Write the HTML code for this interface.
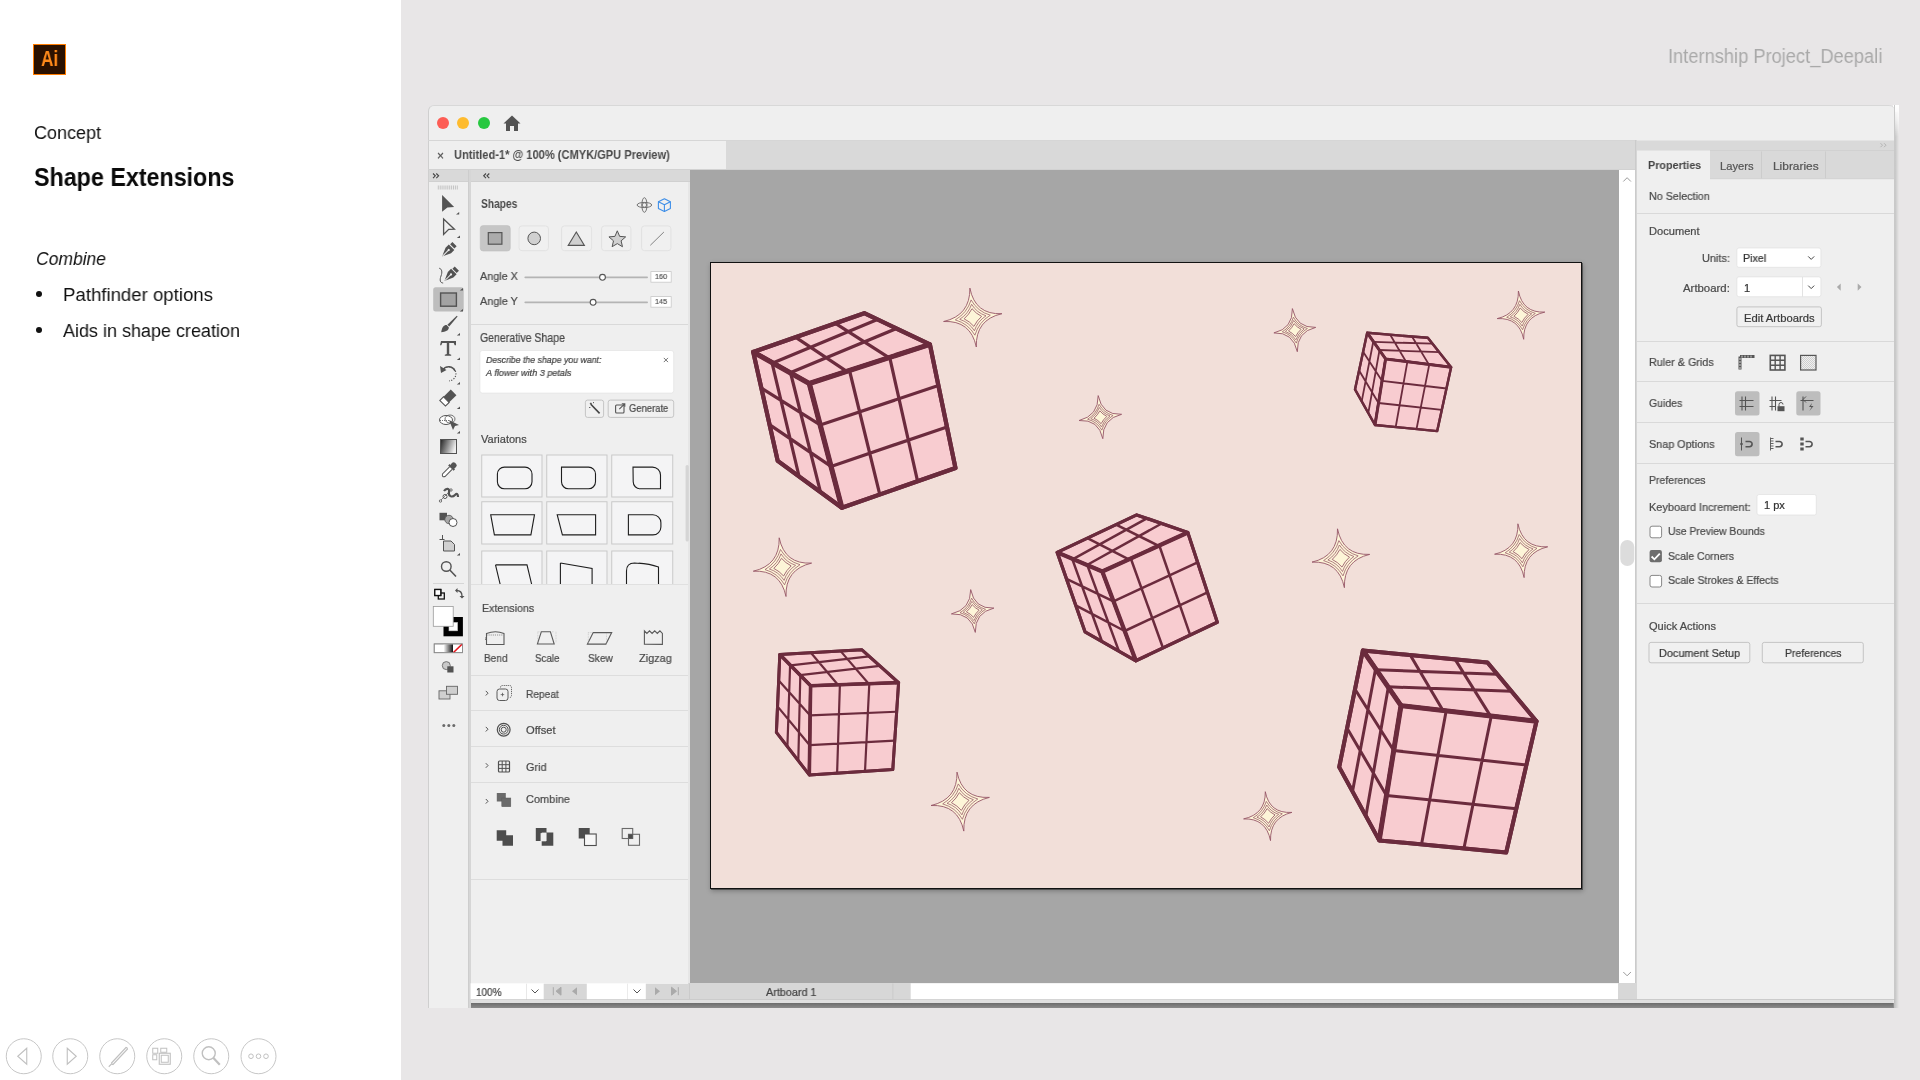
<!DOCTYPE html><html><head><meta charset="utf-8"><style>
*{box-sizing:border-box}
body{margin:0;width:1920px;height:1080px;overflow:hidden;background:#e8e6e7;font-family:"Liberation Sans",sans-serif;position:relative}
.t{position:absolute;white-space:nowrap;line-height:normal;-webkit-font-smoothing:antialiased}
body>*{will-change:transform}
.r{position:absolute}
svg.r{overflow:visible}
</style></head><body><div class="r" style="left:0px;top:0px;width:401px;height:1080px;background:#ffffff;"></div>
<div class="r" style="left:33px;top:44px;width:33px;height:31px;background:#2b1100;border:1.6px solid #ff7c00;"></div>
<div class="t" style="left:41.10px;top:46.01px;font-size:22.09px;color:#ff8a1a;font-weight:bold;font-style:normal;transform:scaleX(0.7785);transform-origin:0 0;">Ai</div>
<div class="t" style="left:33.50px;top:121.93px;font-size:18.75px;color:#111;font-weight:normal;font-style:normal;transform:scaleX(0.9594);transform-origin:0 0;">Concept</div>
<div class="t" style="left:33.50px;top:163.04px;font-size:25.15px;color:#0a0a0a;font-weight:bold;font-style:normal;transform:scaleX(0.9257);transform-origin:0 0;">Shape Extensions</div>
<div class="t" style="left:36.00px;top:247.90px;font-size:18.90px;color:#111;font-weight:normal;font-style:italic;transform:scaleX(0.9257);transform-origin:0 0;">Combine</div>
<div class="r" style="left:35.5px;top:290.5px;width:6px;height:6px;border-radius:50%;background:#111"></div>
<div class="r" style="left:35.5px;top:326.5px;width:6px;height:6px;border-radius:50%;background:#111"></div>
<div class="t" style="left:63.10px;top:284.03px;font-size:18.75px;color:#111;font-weight:normal;font-style:normal;transform:scaleX(0.9924);transform-origin:0 0;">Pathfinder options</div>
<div class="t" style="left:63.10px;top:319.60px;font-size:19.11px;color:#111;font-weight:normal;font-style:normal;transform:scaleX(0.9411);transform-origin:0 0;">Aids in shape creation</div>
<div class="t" style="left:1667.60px;top:45.61px;font-size:19.33px;color:#a9a9a9;font-weight:normal;font-style:normal;transform:scaleX(0.9456);transform-origin:0 0;">Internship Project_Deepali</div>
<svg class="r" style="left:0px;top:0px" width="1920" height="1080" viewBox="0 0 1920 1080"><circle cx="23.75" cy="1056.25" r="17.5" fill="none" stroke="#c6c6c6" stroke-width="1"/><circle cx="70.25" cy="1056.25" r="17.5" fill="none" stroke="#c6c6c6" stroke-width="1"/><circle cx="117.25" cy="1056.25" r="17.5" fill="none" stroke="#c6c6c6" stroke-width="1"/><circle cx="164.25" cy="1056.25" r="17.5" fill="none" stroke="#c6c6c6" stroke-width="1"/><circle cx="211.25" cy="1056.25" r="17.5" fill="none" stroke="#c6c6c6" stroke-width="1"/><circle cx="258.5" cy="1056.25" r="17.5" fill="none" stroke="#c6c6c6" stroke-width="1"/><path d="M26.75,1048.25 L17.75,1056.25 L26.75,1064.25 Z" fill="none" stroke="#c0c0c0" stroke-width="1.1"/><path d="M67.25,1048.25 L76.25,1056.25 L67.25,1064.25 Z" fill="none" stroke="#c0c0c0" stroke-width="1.1"/><path d="M126.25,1047.25 L111.25,1063.25 M127.75,1048.75 L112.75,1064.75 M126.25,1047.25 L127.75,1048.75 M111.25,1063.25 L112.75,1064.75 M111.75,1063.75 L108.75,1066.75" fill="none" stroke="#c0c0c0" stroke-width="1.1"/><rect x="152.75" y="1048.25" width="5" height="5" fill="none" stroke="#c0c0c0"/><rect x="160.75" y="1048.25" width="6" height="4" fill="none" stroke="#c0c0c0"/><rect x="152.75" y="1054.75" width="4" height="5" fill="none" stroke="#c0c0c0"/><rect x="159.25" y="1053.25" width="11" height="11" fill="none" stroke="#c0c0c0" stroke-width="1.1"/><rect x="161.25" y="1055.25" width="7" height="7" fill="none" stroke="#c0c0c0" stroke-width="1"/><circle cx="208.75" cy="1053.25" r="6.5" fill="none" stroke="#c0c0c0" stroke-width="1.4"/><path d="M213.25,1057.75 L219.75,1064.75" stroke="#c0c0c0" stroke-width="2.2"/><circle cx="251.0" cy="1056.25" r="2.3" fill="none" stroke="#c0c0c0" stroke-width="1"/><circle cx="258.5" cy="1056.25" r="2.3" fill="none" stroke="#c0c0c0" stroke-width="1"/><circle cx="266.0" cy="1056.25" r="2.3" fill="none" stroke="#c0c0c0" stroke-width="1"/></svg>
<div class="r" style="left:470px;top:999px;width:1424px;height:1px;background:#cbcbcb;"></div>
<div class="r" style="left:470px;top:1000px;width:1423px;height:3px;background:#e0e0e0;"></div>
<div class="r" style="left:470px;top:1003px;width:1426px;height:5px;background:linear-gradient(#6c6c6c,#8c8c8c)"></div>
<div class="r" style="left:1893px;top:1003px;width:4px;height:5px;background:linear-gradient(90deg,#8c8c8c,rgba(180,180,180,0.6))"></div>
<div class="r" style="left:1894px;top:112px;width:5px;height:896px;background:linear-gradient(90deg,#bdbdbd,#d2d2d2 50%,rgba(231,229,230,0))"></div>
<div class="r" style="left:1893px;top:105px;width:6px;height:32px;background:linear-gradient(#fff,rgba(255,255,255,0.6) 50%,rgba(255,255,255,0))"></div>
<div class="r" style="left:428px;top:105px;width:1467px;height:35px;background:#efefef;border-top-left-radius:6px;border-top-right-radius:6px;border-left:1px solid #cfcfcf;border-top:1px solid #d8d8d8;"></div>
<div class="r" style="left:428px;top:140px;width:1467px;height:1px;background:#d6d6d6;"></div>
<div class="r" style="left:437.0px;top:116.9px;width:12.4px;height:12.4px;border-radius:50%;background:#fd5d55"></div>
<div class="r" style="left:457.3px;top:116.9px;width:12.4px;height:12.4px;border-radius:50%;background:#febb2e"></div>
<div class="r" style="left:477.6px;top:116.9px;width:12.4px;height:12.4px;border-radius:50%;background:#27c840"></div>
<svg class="r" style="left:503px;top:115px" width="18" height="17" viewBox="0 0 18 17"><path d="M9,0.5 L17.5,8.5 L15,8.5 L15,16 L11,16 L11,11 L7,11 L7,16 L3,16 L3,8.5 L0.5,8.5 Z" fill="#535353"/></svg>
<div class="r" style="left:428px;top:141px;width:1208px;height:29px;background:#d9d9d9;"></div>
<div class="r" style="left:428px;top:141px;width:298px;height:28px;background:#efefef;border-left:1px solid #cfcfcf;"></div>
<div class="r" style="left:428px;top:169px;width:1208px;height:1px;background:#d2d2d2;"></div>
<div class="t" style="left:436.50px;top:148.64px;font-size:12.00px;color:#555;font-weight:normal;font-style:normal;-webkit-text-stroke:0.22px currentColor;">×</div>
<div class="t" style="left:453.75px;top:148.32px;font-size:12.35px;color:#4a4a4a;font-weight:bold;font-style:normal;transform:scaleX(0.8975);transform-origin:0 0;">Untitled-1* @ 100% (CMYK/GPU Preview)</div>
<div class="r" style="left:428px;top:170px;width:41px;height:838px;background:#efefef;border-left:1px solid #cfcfcf;"></div>
<div class="r" style="left:428px;top:170px;width:41px;height:12px;background:#d9d9d9;border-left:1px solid #cfcfcf;border-bottom:1px solid #d0d0d0;"></div>
<div class="r" style="left:468px;top:170px;width:3px;height:838px;background:#d6d6d6;border-left:1px solid #cdcdcd;"></div>
<div class="r" style="left:471px;top:170px;width:219px;height:829px;background:#efefef;"></div>
<div class="r" style="left:471px;top:170px;width:219px;height:12px;background:#d9d9d9;border-bottom:1px solid #d0d0d0;"></div>
<div class="r" style="left:688px;top:182px;width:2px;height:817px;background:#e6e6e6;"></div>
<div class="r" style="left:690px;top:170px;width:929px;height:813px;background:#a6a6a6;"></div>
<div class="r" style="left:710px;top:262px;width:872px;height:627px;background:#f2dfd9;border:1px solid #111;box-shadow:1px 1px 0 rgba(0,0,0,0.4),1px 2px 5px rgba(0,0,0,0.28)"></div>
<svg class="r" style="left:0;top:0" width="1920" height="1080" viewBox="0 0 1920 1080"><path d="M969.9,288.1Q975.0,314.9 1001.9,313.7Q975.5,319.6 976.3,347.0Q970.8,320.2 943.6,321.5Q970.3,315.5 969.9,288.1Z" fill="#fdf5d8" stroke="#955566" stroke-width="0.9"/><path d="M971.1,299.9Q977.6,311.6 990.3,315.2Q978.7,322.2 974.9,335.2Q968.3,323.6 955.3,319.9Q967.1,313.0 971.1,299.9Z" fill="#fdf5d8" stroke="#955566" stroke-width="0.75"/><path d="M971.6,304.3Q976.7,312.7 986.0,315.8Q977.6,321.3 974.4,330.8Q969.2,322.4 959.7,319.3Q968.2,313.9 971.6,304.3Z" fill="#fdf5d8" stroke="#955566" stroke-width="0.75"/><path d="M972.0,308.7Q976.0,313.6 981.6,316.4Q976.8,320.6 973.9,326.4Q969.8,321.6 964.1,318.8Q969.0,314.5 972.0,308.7Z" fill="#fdf5d8" stroke="#955566" stroke-width="0.85"/><path d="M1292.4,308.6Q1296.3,328.2 1315.7,327.4Q1296.7,331.7 1297.3,351.7Q1293.3,332.1 1273.9,332.9Q1293.0,328.6 1292.4,308.6Z" fill="#fdf5d8" stroke="#955566" stroke-width="0.9"/><path d="M1293.4,317.2Q1298.1,325.8 1307.4,328.5Q1299.0,333.5 1296.3,343.1Q1291.5,334.5 1282.3,331.8Q1290.6,326.8 1293.4,317.2Z" fill="#fdf5d8" stroke="#955566" stroke-width="0.75"/><path d="M1293.7,320.5Q1297.5,326.6 1304.2,328.9Q1298.2,332.9 1295.9,339.8Q1292.2,333.7 1285.4,331.4Q1291.4,327.4 1293.7,320.5Z" fill="#fdf5d8" stroke="#955566" stroke-width="0.75"/><path d="M1294.1,323.7Q1297.0,327.2 1301.1,329.3Q1297.6,332.4 1295.6,336.6Q1292.6,333.1 1288.5,331.0Q1292.0,327.9 1294.1,323.7Z" fill="#fdf5d8" stroke="#955566" stroke-width="0.85"/><path d="M1518.4,291.0Q1522.7,313.1 1544.8,312.1Q1523.1,316.9 1523.7,339.3Q1519.3,317.4 1497.2,318.6Q1518.9,313.6 1518.4,291.0Z" fill="#fdf5d8" stroke="#955566" stroke-width="0.9"/><path d="M1519.5,300.7Q1524.8,310.3 1535.3,313.4Q1525.8,319.0 1522.6,329.7Q1517.2,320.2 1506.7,317.3Q1516.3,311.5 1519.5,300.7Z" fill="#fdf5d8" stroke="#955566" stroke-width="0.75"/><path d="M1519.8,304.3Q1524.1,311.3 1531.7,313.8Q1524.9,318.3 1522.2,326.1Q1518.0,319.2 1510.3,316.8Q1517.2,312.2 1519.8,304.3Z" fill="#fdf5d8" stroke="#955566" stroke-width="0.75"/><path d="M1520.2,308.0Q1523.6,312.0 1528.2,314.3Q1524.2,317.8 1521.8,322.5Q1518.5,318.5 1513.9,316.3Q1517.9,312.7 1520.2,308.0Z" fill="#fdf5d8" stroke="#955566" stroke-width="0.85"/><path d="M1098.2,395.6Q1101.9,415.3 1121.6,414.3Q1102.3,418.8 1102.8,438.7Q1098.9,419.2 1079.1,420.5Q1098.5,415.8 1098.2,395.6Z" fill="#fdf5d8" stroke="#955566" stroke-width="0.9"/><path d="M1099.1,404.3Q1103.8,412.8 1113.1,415.5Q1104.7,420.6 1101.8,430.1Q1097.0,421.7 1087.6,419.2Q1096.2,414.0 1099.1,404.3Z" fill="#fdf5d8" stroke="#955566" stroke-width="0.75"/><path d="M1099.4,407.5Q1103.2,413.7 1110.0,415.9Q1103.8,419.9 1101.5,426.9Q1097.7,420.8 1090.8,418.7Q1097.0,414.6 1099.4,407.5Z" fill="#fdf5d8" stroke="#955566" stroke-width="0.75"/><path d="M1099.8,410.8Q1102.7,414.3 1106.8,416.4Q1103.3,419.5 1101.1,423.7Q1098.2,420.2 1094.0,418.2Q1097.6,415.1 1099.8,410.8Z" fill="#fdf5d8" stroke="#955566" stroke-width="0.85"/><path d="M779.2,537.8Q784.6,564.5 811.6,563.1Q785.1,569.2 786.0,596.5Q780.5,569.8 753.3,571.2Q779.9,565.1 779.2,537.8Z" fill="#fdf5d8" stroke="#955566" stroke-width="0.9"/><path d="M780.5,549.5Q787.2,561.1 800.0,564.7Q788.4,571.7 784.6,584.8Q777.9,573.2 765.0,569.6Q776.7,562.6 780.5,549.5Z" fill="#fdf5d8" stroke="#955566" stroke-width="0.75"/><path d="M781.0,553.9Q786.3,562.3 795.6,565.3Q787.2,570.8 784.1,580.4Q778.8,572.0 769.4,569.0Q777.8,563.5 781.0,553.9Z" fill="#fdf5d8" stroke="#955566" stroke-width="0.75"/><path d="M781.5,558.3Q785.6,563.1 791.2,565.9Q786.4,570.2 783.6,576.0Q779.4,571.2 773.8,568.4Q778.6,564.1 781.5,558.3Z" fill="#fdf5d8" stroke="#955566" stroke-width="0.85"/><path d="M970.7,589.6Q974.3,609.1 993.9,608.1Q974.7,612.5 975.3,632.4Q971.3,612.9 951.4,613.9Q970.9,609.5 970.7,589.6Z" fill="#fdf5d8" stroke="#955566" stroke-width="0.9"/><path d="M971.6,598.2Q976.2,606.6 985.5,609.3Q977.1,614.3 974.3,623.8Q969.4,615.4 960.0,612.7Q968.6,607.7 971.6,598.2Z" fill="#fdf5d8" stroke="#955566" stroke-width="0.75"/><path d="M971.9,601.4Q975.6,607.5 982.3,609.7Q976.2,613.7 973.9,620.6Q970.1,614.5 963.2,612.3Q969.4,608.3 971.9,601.4Z" fill="#fdf5d8" stroke="#955566" stroke-width="0.75"/><path d="M972.2,604.6Q975.1,608.1 979.1,610.1Q975.7,613.2 973.6,617.4Q970.6,613.9 966.4,611.9Q970.0,608.8 972.2,604.6Z" fill="#fdf5d8" stroke="#955566" stroke-width="0.85"/><path d="M1337.5,528.8Q1342.9,555.6 1369.7,554.4Q1343.5,560.3 1344.4,587.7Q1338.9,560.9 1312.0,562.1Q1338.3,556.2 1337.5,528.8Z" fill="#fdf5d8" stroke="#955566" stroke-width="0.9"/><path d="M1338.9,540.6Q1345.5,552.3 1358.2,555.9Q1346.7,562.9 1343.0,575.9Q1336.3,564.2 1323.6,560.6Q1335.1,553.6 1338.9,540.6Z" fill="#fdf5d8" stroke="#955566" stroke-width="0.75"/><path d="M1339.4,545.0Q1344.6,553.4 1353.9,556.5Q1345.6,562.0 1342.5,571.5Q1337.2,563.1 1327.9,560.0Q1336.2,554.5 1339.4,545.0Z" fill="#fdf5d8" stroke="#955566" stroke-width="0.75"/><path d="M1339.9,549.4Q1343.9,554.3 1349.5,557.1Q1344.8,561.3 1342.0,567.1Q1337.9,562.2 1332.2,559.4Q1337.0,555.2 1339.9,549.4Z" fill="#fdf5d8" stroke="#955566" stroke-width="0.85"/><path d="M1517.9,523.8Q1523.0,548.2 1547.7,546.8Q1523.4,552.5 1524.1,577.6Q1519.2,553.0 1494.6,554.2Q1518.7,548.7 1517.9,523.8Z" fill="#fdf5d8" stroke="#955566" stroke-width="0.9"/><path d="M1519.2,534.5Q1525.3,545.1 1537.0,548.3Q1526.4,554.8 1522.9,566.8Q1516.9,556.1 1505.2,552.8Q1515.7,546.4 1519.2,534.5Z" fill="#fdf5d8" stroke="#955566" stroke-width="0.75"/><path d="M1519.6,538.5Q1524.5,546.2 1533.1,548.9Q1525.4,554.0 1522.4,562.8Q1517.7,555.0 1509.2,552.2Q1516.8,547.2 1519.6,538.5Z" fill="#fdf5d8" stroke="#955566" stroke-width="0.75"/><path d="M1520.1,542.6Q1523.9,546.9 1529.1,549.5Q1524.6,553.4 1522.0,558.7Q1518.3,554.3 1513.1,551.7Q1517.5,547.8 1520.1,542.6Z" fill="#fdf5d8" stroke="#955566" stroke-width="0.85"/><path d="M957.0,772.1Q962.4,798.8 989.4,797.4Q962.9,803.6 963.8,831.1Q958.2,804.2 931.0,805.5Q957.7,799.5 957.0,772.1Z" fill="#fdf5d8" stroke="#955566" stroke-width="0.9"/><path d="M958.3,783.9Q964.9,795.5 977.8,799.0Q966.2,806.1 962.4,819.3Q955.7,807.6 942.7,803.9Q954.4,796.9 958.3,783.9Z" fill="#fdf5d8" stroke="#955566" stroke-width="0.75"/><path d="M958.8,788.3Q964.0,796.7 973.4,799.7Q965.0,805.2 961.9,814.8Q956.6,806.4 947.1,803.3Q955.6,797.8 958.8,788.3Z" fill="#fdf5d8" stroke="#955566" stroke-width="0.75"/><path d="M959.3,792.7Q963.4,797.5 969.0,800.3Q964.2,804.6 961.4,810.4Q957.2,805.6 951.5,802.7Q956.4,798.5 959.3,792.7Z" fill="#fdf5d8" stroke="#955566" stroke-width="0.85"/><path d="M1265.3,791.7Q1269.5,813.7 1291.9,812.4Q1270.0,817.6 1270.5,840.6Q1266.1,818.1 1243.6,818.9Q1265.7,814.2 1265.3,791.7Z" fill="#fdf5d8" stroke="#955566" stroke-width="0.9"/><path d="M1266.3,801.4Q1271.7,810.9 1282.3,813.8Q1272.6,819.7 1269.4,830.7Q1263.9,820.9 1253.3,817.7Q1263.0,812.1 1266.3,801.4Z" fill="#fdf5d8" stroke="#955566" stroke-width="0.75"/><path d="M1266.7,805.0Q1270.9,811.9 1278.7,814.3Q1271.7,819.0 1269.0,827.0Q1264.7,819.9 1256.9,817.2Q1263.9,812.8 1266.7,805.0Z" fill="#fdf5d8" stroke="#955566" stroke-width="0.75"/><path d="M1267.1,808.6Q1270.4,812.6 1275.0,814.9Q1271.0,818.4 1268.6,823.3Q1265.2,819.2 1260.6,816.8Q1264.6,813.4 1267.1,808.6Z" fill="#fdf5d8" stroke="#955566" stroke-width="0.85"/><polygon points="753.2,351.9 864.3,313.2 929.9,344.4 809.3,383.5" fill="#f8ccd0" stroke="#6b2b3d" stroke-width="4.2" stroke-linejoin="round"/><path d="M795.4,337.2L846.7,371.4M772.8,363.0L877.4,319.4M835.4,323.3L888.9,357.7M790.2,372.8L896.4,328.5" stroke="#6b2b3d" stroke-width="3.2" fill="none"/><polygon points="753.2,351.9 809.3,383.5 841.9,507.8 777.7,460.9" fill="#f8ccd0" stroke="#6b2b3d" stroke-width="4.2" stroke-linejoin="round"/><path d="M771.9,362.4L799.1,476.5M761.4,388.2L820.2,424.9M790.6,373.0L820.5,492.2M769.5,424.6L831.0,466.4" stroke="#6b2b3d" stroke-width="3.2" fill="none"/><polygon points="809.3,383.5 929.9,344.4 955.5,468.1 841.9,507.8" fill="#f8ccd0" stroke="#6b2b3d" stroke-width="4.2" stroke-linejoin="round"/><path d="M849.5,370.5L879.8,494.6M820.2,424.9L938.4,385.6M889.7,357.4L917.6,481.3M831.0,466.4L947.0,426.9" stroke="#6b2b3d" stroke-width="3.2" fill="none"/><polygon points="753.2,351.9 864.3,313.2 929.9,344.4 955.5,468.1 841.9,507.8 777.7,460.9" fill="none" stroke="#6b2b3d" stroke-width="4.2" stroke-linejoin="round"/><path d="M753.2,351.9L809.3,383.5L929.9,344.4M809.3,383.5L841.9,507.8" stroke="#6b2b3d" stroke-width="5.2" fill="none" stroke-linejoin="round"/><polygon points="1367.2,332.8 1427.8,337.8 1451.1,367.2 1385.6,358.9" fill="#f8ccd0" stroke="#6b2b3d" stroke-width="2.4" stroke-linejoin="round"/><path d="M1390.2,334.7L1405.9,361.5M1373.6,341.9L1432.5,343.7M1412.0,336.5L1428.8,364.4M1379.3,350.0L1439.2,352.2" stroke="#6b2b3d" stroke-width="1.8" fill="none"/><polygon points="1367.2,332.8 1385.6,358.9 1375.0,425.0 1355.0,389.4" fill="#f8ccd0" stroke="#6b2b3d" stroke-width="2.4" stroke-linejoin="round"/><path d="M1373.3,341.5L1361.7,401.3M1363.1,351.7L1382.1,380.9M1379.5,350.2L1368.3,413.1M1359.1,370.5L1378.5,403.0" stroke="#6b2b3d" stroke-width="1.8" fill="none"/><polygon points="1385.6,358.9 1451.1,367.2 1437.2,431.1 1375.0,425.0" fill="#f8ccd0" stroke="#6b2b3d" stroke-width="2.4" stroke-linejoin="round"/><path d="M1407.4,361.7L1395.7,427.0M1382.1,380.9L1446.5,388.5M1429.3,364.4L1416.5,429.1M1378.5,403.0L1441.8,409.8" stroke="#6b2b3d" stroke-width="1.8" fill="none"/><polygon points="1367.2,332.8 1427.8,337.8 1451.1,367.2 1437.2,431.1 1375.0,425.0 1355.0,389.4" fill="none" stroke="#6b2b3d" stroke-width="2.4" stroke-linejoin="round"/><path d="M1367.2,332.8L1385.6,358.9L1451.1,367.2M1385.6,358.9L1375.0,425.0" stroke="#6b2b3d" stroke-width="3.0" fill="none" stroke-linejoin="round"/><polygon points="1057.2,552.4 1136.7,514.9 1187.8,532.5 1102.3,571.5" fill="#f8ccd0" stroke="#6b2b3d" stroke-width="3.2" stroke-linejoin="round"/><path d="M1087.4,538.1L1128.8,559.4M1073.0,559.1L1146.9,518.4M1116.0,524.6L1158.7,545.8M1087.0,565.0L1161.7,523.5" stroke="#6b2b3d" stroke-width="2.5" fill="none"/><polygon points="1057.2,552.4 1102.3,571.5 1135.9,660.8 1085.0,631.8" fill="#f8ccd0" stroke="#6b2b3d" stroke-width="3.2" stroke-linejoin="round"/><path d="M1072.2,558.8L1102.0,641.5M1066.5,578.9L1113.5,601.3M1087.3,565.1L1118.9,651.1M1075.7,605.3L1124.7,631.0" stroke="#6b2b3d" stroke-width="2.5" fill="none"/><polygon points="1102.3,571.5 1187.8,532.5 1217.3,622.3 1135.9,660.8" fill="#f8ccd0" stroke="#6b2b3d" stroke-width="3.2" stroke-linejoin="round"/><path d="M1130.8,558.5L1163.0,648.0M1113.5,601.3L1197.6,562.4M1159.3,545.5L1190.2,635.1M1124.7,631.0L1207.5,592.4" stroke="#6b2b3d" stroke-width="2.5" fill="none"/><polygon points="1057.2,552.4 1136.7,514.9 1187.8,532.5 1217.3,622.3 1135.9,660.8 1085.0,631.8" fill="none" stroke="#6b2b3d" stroke-width="3.2" stroke-linejoin="round"/><path d="M1057.2,552.4L1102.3,571.5L1187.8,532.5M1102.3,571.5L1135.9,660.8" stroke="#6b2b3d" stroke-width="4.2" fill="none" stroke-linejoin="round"/><polygon points="779.8,654.5 861.7,649.7 898.6,682.7 810.6,685.7" fill="#f8ccd0" stroke="#6b2b3d" stroke-width="3.0" stroke-linejoin="round"/><path d="M810.9,652.7L837.9,684.8M790.6,665.4L869.1,656.3M840.4,650.9L868.7,683.7M800.1,675.1L879.8,665.9" stroke="#6b2b3d" stroke-width="2.2" fill="none"/><polygon points="779.8,654.5 810.6,685.7 809.3,774.9 776.4,732.4" fill="#f8ccd0" stroke="#6b2b3d" stroke-width="3.0" stroke-linejoin="round"/><path d="M790.1,664.9L787.4,746.6M778.7,680.5L810.2,715.4M800.3,675.3L798.3,760.7M777.5,706.4L809.7,745.2" stroke="#6b2b3d" stroke-width="2.2" fill="none"/><polygon points="810.6,685.7 898.6,682.7 892.8,769.6 809.3,774.9" fill="#f8ccd0" stroke="#6b2b3d" stroke-width="3.0" stroke-linejoin="round"/><path d="M839.9,684.7L837.1,773.1M810.2,715.4L896.7,711.7M869.3,683.7L865.0,771.4M809.7,745.2L894.7,740.6" stroke="#6b2b3d" stroke-width="2.2" fill="none"/><polygon points="779.8,654.5 861.7,649.7 898.6,682.7 892.8,769.6 809.3,774.9 776.4,732.4" fill="none" stroke="#6b2b3d" stroke-width="3.0" stroke-linejoin="round"/><path d="M779.8,654.5L810.6,685.7L898.6,682.7M810.6,685.7L809.3,774.9" stroke="#6b2b3d" stroke-width="3.6" fill="none" stroke-linejoin="round"/><polygon points="1362.9,650.4 1487.5,662.5 1536.5,721.2 1401.0,705.6" fill="#f8ccd0" stroke="#6b2b3d" stroke-width="4.0" stroke-linejoin="round"/><path d="M1410.2,655.0L1443.0,710.5M1376.2,669.7L1497.3,674.2M1455.1,659.4L1490.4,715.9M1388.0,686.8L1511.5,691.3" stroke="#6b2b3d" stroke-width="3.0" fill="none"/><polygon points="1362.9,650.4 1401.0,705.6 1379.2,840.4 1339.2,767.1" fill="#f8ccd0" stroke="#6b2b3d" stroke-width="4.0" stroke-linejoin="round"/><path d="M1375.6,668.8L1352.5,791.5M1355.0,689.3L1393.7,750.5M1388.3,687.2L1365.9,816.0M1347.1,728.2L1386.5,795.5" stroke="#6b2b3d" stroke-width="3.0" fill="none"/><polygon points="1401.0,705.6 1536.5,721.2 1506.2,852.5 1379.2,840.4" fill="#f8ccd0" stroke="#6b2b3d" stroke-width="4.0" stroke-linejoin="round"/><path d="M1446.2,710.8L1421.5,844.4M1393.7,750.5L1526.4,765.0M1491.3,716.0L1463.9,848.5M1386.5,795.5L1516.3,808.8" stroke="#6b2b3d" stroke-width="3.0" fill="none"/><polygon points="1362.9,650.4 1487.5,662.5 1536.5,721.2 1506.2,852.5 1379.2,840.4 1339.2,767.1" fill="none" stroke="#6b2b3d" stroke-width="4.0" stroke-linejoin="round"/><path d="M1362.9,650.4L1401.0,705.6L1536.5,721.2M1401.0,705.6L1379.2,840.4" stroke="#6b2b3d" stroke-width="5.0" fill="none" stroke-linejoin="round"/></svg>
<div class="r" style="left:1619px;top:170px;width:17px;height:813px;background:#ffffff;"></div>
<div class="r" style="left:1635px;top:140px;width:3px;height:859px;background:#d6d6d6;border-left:1px solid #cbcbcb;"></div>
<div class="r" style="left:470px;top:983px;width:1149px;height:16px;background:#d7d7d7;"></div>
<div class="r" style="left:1619px;top:983px;width:18px;height:16px;background:#d7d7d7;"></div>
<div class="r" style="left:1637px;top:140px;width:257px;height:859px;background:#efefef;"></div>
<div class="r" style="left:1894px;top:105px;width:1px;height:894px;background:#c9c9c9;"></div>
<svg class="r" style="left:0px;top:0px" width="1920" height="1080" viewBox="0 0 1920 1080"><rect x="437.8" y="185.5" width="1" height="4" fill="#c4c4c4"/><rect x="439.7" y="185.5" width="1" height="4" fill="#c4c4c4"/><rect x="441.6" y="185.5" width="1" height="4" fill="#c4c4c4"/><rect x="443.5" y="185.5" width="1" height="4" fill="#c4c4c4"/><rect x="445.4" y="185.5" width="1" height="4" fill="#c4c4c4"/><rect x="447.3" y="185.5" width="1" height="4" fill="#c4c4c4"/><rect x="449.2" y="185.5" width="1" height="4" fill="#c4c4c4"/><rect x="451.1" y="185.5" width="1" height="4" fill="#c4c4c4"/><rect x="453.0" y="185.5" width="1" height="4" fill="#c4c4c4"/><rect x="454.9" y="185.5" width="1" height="4" fill="#c4c4c4"/><rect x="456.8" y="185.5" width="1" height="4" fill="#c4c4c4"/><path d="M442.1,195.1 L454.1,206.9 L447.4,207.4 L442.1,211.8 Z" fill="#535353"/><path d="M456.0,214.5 L459.2,211.9 L459.2,214.5 Z" fill="#535353"/><path d="M443.6,219 L454.4,229.2 L448.7,229.4 L443.6,234.5 Z" fill="none" stroke="#535353" stroke-width="1.3" stroke-linejoin="miter"/><g transform="translate(448.3,250.4) rotate(45)"><path d="M-3,-8.8 h6 v3.2 h-6 z M-3.9,-4.6 h7.8 v4.6 l-3.9,8.8 l-3.9,-8.8 z" fill="#535353"/><path d="M0,-0.6 v9" stroke="#efefef" stroke-width="1"/><circle cx="0" cy="-0.6" r="1.1" fill="#efefef"/></g><path d="M456.8,238 L460,235.4 L460,238 Z" fill="#535353"/><g transform="translate(450.6,274.8) rotate(45)"><path d="M-3,-8.8 h6 v3.2 h-6 z M-3.9,-4.6 h7.8 v4.6 l-3.9,8.8 l-3.9,-8.8 z" fill="#535353"/><path d="M0,-0.6 v9" stroke="#efefef" stroke-width="1"/><circle cx="0" cy="-0.6" r="1.1" fill="#efefef"/></g><path d="M439.2,268.2 C442,269 442.5,272 441,276 C439.5,280 440,283 443.2,283" fill="none" stroke="#535353" stroke-width="1"/><rect x="433.2" y="287.3" width="30.5" height="24.3" rx="2.5" fill="#bdbdbd"/><rect x="440.6" y="293" width="15.8" height="13.2" fill="#a3a3a3" stroke="#535353" stroke-width="1.4"/><path d="M459.8,290.5 L463,287.9 L463,290.5 Z" fill="#535353"/><path d="M459.8,311.5 L463,308.9 L463,311.5 Z" fill="#535353"/><path d="M456.8,315.8 L457.6,316.6 L449.2,326.6 L447.4,324.8 Z" fill="#535353"/><path d="M446.6,325 C443.5,325 442,327.5 441.2,332.2 C445.5,331.8 449,330.5 448.8,327.2 Z" fill="#535353"/><path d="M456.8,335.5 L460,332.9 L460,335.5 Z" fill="#535353"/><path d="M441,341 h15 v4.3 h-1.3 l-1,-2.2 h-4.5 v10.8 l2,0.8 v1 h-6.4 v-1 l2,-0.8 v-10.8 h-4.5 l-1,2.2 h-1.3 z" fill="#535353"/><path d="M456.8,360 L460,357.4 L460,360 Z" fill="#535353"/><path d="M442.5,371 A7,7 0 1 1 449,380.8" fill="none" stroke="#535353" stroke-width="1.2" stroke-dasharray="1.2,1.4"/><path d="M443,369.5 A7,7 0 0 1 455,371" fill="none" stroke="#535353" stroke-width="1.6"/><path d="M440,366 L441,373 L446.5,370 Z" fill="#535353"/><path d="M456.8,384.5 L460,381.9 L460,384.5 Z" fill="#535353"/><g transform="translate(448.3,397.6) rotate(-45)"><rect x="-3" y="-4" width="10.5" height="8" fill="#535353"/><rect x="-8" y="-4" width="5.2" height="8" fill="#fff" stroke="#535353" stroke-width="1.1"/></g><path d="M456.8,409 L460,406.4 L460,409 Z" fill="#535353"/><ellipse cx="446" cy="420" rx="6.5" ry="4.5" fill="#fff" stroke="#535353" stroke-width="1"/><ellipse cx="450" cy="419" rx="5" ry="4" fill="none" stroke="#535353" stroke-width="0.8"/><path d="M440,420.5 h9" stroke="#535353" stroke-width="0.8" stroke-dasharray="1,1"/><path d="M449,420 L459,425 L455,426 L453,430 Z" fill="#535353"/><path d="M456.8,433.5 L460,430.9 L460,433.5 Z" fill="#535353"/><defs><linearGradient id="gr1" x1="0" y1="0" x2="1" y2="0.3"><stop offset="0" stop-color="#222"/><stop offset="1" stop-color="#eee"/></linearGradient></defs><rect x="440.5" y="439.5" width="16" height="14" fill="url(#gr1)" stroke="#535353" stroke-width="1"/><g transform="translate(448.5,470.5) rotate(45)"><rect x="-2.8" y="-10" width="5.6" height="5.5" rx="2" fill="#535353"/><rect x="-3.8" y="-5.5" width="7.6" height="2.2" fill="#535353"/><path d="M-1.8,-3.3 v10 q1.8,3 3.6,0 v-10" fill="#fff" stroke="#535353" stroke-width="1"/></g><path d="M444,491 C446,488 450,488 449,492 C448,496 452,498 455,495 C457,493 458,494 458,497" fill="none" stroke="#535353" stroke-width="2.2"/><circle cx="445" cy="496.5" r="2" fill="#fff" stroke="#535353"/><circle cx="440.5" cy="501" r="1.2" fill="none" stroke="#535353" stroke-width="0.8"/><circle cx="451" cy="490" r="1.2" fill="none" stroke="#535353" stroke-width="0.8"/><path d="M441,500 L450,491" stroke="#535353" stroke-width="0.7"/><rect x="439.5" y="512.8" width="7.5" height="7.5" fill="#535353"/><circle cx="449" cy="519.5" r="4.2" fill="#a7a7a7" stroke="#535353" stroke-width="0.8"/><circle cx="453" cy="522.5" r="4" fill="#fff" stroke="#535353" stroke-width="1"/><path d="M442.5,535 v5 M439.5,539.5 h5" stroke="#535353" stroke-width="1"/><path d="M443.5,541 h7.5 l3.5,3.5 v6.5 h-11 z" fill="#d0d0d0" stroke="#535353" stroke-width="1"/><path d="M456.8,555.5 L460,552.9 L460,555.5 Z" fill="#535353"/><circle cx="446.3" cy="566.5" r="4.8" fill="none" stroke="#535353" stroke-width="1.4"/><path d="M449.8,570 L456,576.5" stroke="#535353" stroke-width="1.6"/><rect x="433" y="583" width="31" height="1" fill="#d6d6d6"/><rect x="434.8" y="589.5" width="6" height="6" fill="#fff" stroke="#111" stroke-width="1.3"/><rect x="438.3" y="593" width="6" height="6" fill="none" stroke="#111" stroke-width="1.3"/><rect x="434.8" y="589.5" width="6" height="6" fill="#fff" stroke="#111" stroke-width="1.3"/><path d="M456.5,590.5 C460,590.5 462,592.5 462,596" fill="none" stroke="#535353" stroke-width="1.3"/><path d="M455,590.5 L457.5,588 L457.5,593 Z M462,598.5 L459.5,596 L464.5,596 Z" fill="#535353"/><rect x="443.5" y="617" width="19.4" height="19.3" fill="#000"/><rect x="449" y="622.5" width="8.5" height="8.3" fill="#fff" stroke="#cfcfcf" stroke-width="0.6"/><rect x="433.3" y="606.6" width="19.9" height="19.7" fill="#fff" stroke="#9a9a9a" stroke-width="0.8"/><defs><linearGradient id="gr2" x1="0" x2="1"><stop offset="0" stop-color="#fff"/><stop offset="1" stop-color="#111"/></linearGradient></defs><rect x="434.2" y="643.9" width="28.3" height="8.8" fill="#fff" stroke="#8a8a8a" stroke-width="0.8"/><rect x="443.6" y="644.3" width="9.4" height="8" fill="url(#gr2)"/><path d="M453.5,652.5 L462,644.2" stroke="#e8141c" stroke-width="1.6"/><rect x="434.2" y="643.9" width="28.3" height="8.8" fill="none" stroke="#8a8a8a" stroke-width="0.8"/><circle cx="446.3" cy="665.6" r="4" fill="#c9c9c9" stroke="#6a6a6a" stroke-width="0.9"/><rect x="447.3" y="666.3" width="6.2" height="6.2" fill="#535353"/><rect x="439" y="690.8" width="11" height="8.2" fill="#cfcfcf" stroke="#666" stroke-width="0.9"/><rect x="446.5" y="686.3" width="11" height="8" fill="#cfcfcf" stroke="#666" stroke-width="0.9"/><circle cx="443.8" cy="725.4" r="1.5" fill="#6a6a6a"/><circle cx="448.8" cy="725.4" r="1.5" fill="#6a6a6a"/><circle cx="453.8" cy="725.4" r="1.5" fill="#6a6a6a"/><path d="M433,173.5 l2.3,2.3 l-2.3,2.3 M436.3,173.5 l2.3,2.3 l-2.3,2.3" fill="none" stroke="#444" stroke-width="1.1"/><path d="M486,173.5 l-2.3,2.3 l2.3,2.3 M489.3,173.5 l-2.3,2.3 l2.3,2.3" fill="none" stroke="#444" stroke-width="1.1"/></svg>
<svg class="r" style="left:0px;top:0px" width="1920" height="1080" viewBox="0 0 1920 1080"><g transform="translate(644.4,205)"><ellipse rx="7.3" ry="2.6" fill="none" stroke="#666" stroke-width="0.9"/><ellipse rx="2.6" ry="7.3" fill="none" stroke="#666" stroke-width="0.9"/><circle r="2.2" fill="none" stroke="#666" stroke-width="0.8"/></g><g transform="translate(664.4,205)" fill="none" stroke="#3d8ee8" stroke-width="1.1" stroke-linejoin="round"><path d="M0,-6.3 L6,-3.3 L6,3.5 L0,6.5 L-6,3.5 L-6,-3.3 Z"/><path d="M-6,-3.3 L0,-0.3 L6,-3.3 M0,-0.3 L0,6.5"/></g><rect x="480.25" y="225.6" width="30.0" height="25.4" rx="3" fill="#c6c6c6" stroke="#bdbdbd" stroke-width="0.6"/><rect x="519.05" y="225.9" width="29.4" height="24.8" rx="3" fill="#f0f0f0" stroke="#dedede" stroke-width="0.8"/><rect x="561.55" y="225.9" width="30.049999999999976" height="24.8" rx="3" fill="#f0f0f0" stroke="#dedede" stroke-width="0.8"/><rect x="601.55" y="225.9" width="29.4" height="24.8" rx="3" fill="#f0f0f0" stroke="#dedede" stroke-width="0.8"/><rect x="641.55" y="225.9" width="29.4" height="24.8" rx="3" fill="#f0f0f0" stroke="#dedede" stroke-width="0.8"/><rect x="488.3" y="232.6" width="13.6" height="11.6" fill="#ababab" stroke="#555" stroke-width="1.2"/><circle cx="534.2" cy="238.4" r="6.3" fill="#d0d0d0" stroke="#555" stroke-width="1"/><path d="M576.3,232 L584.4,245.4 L568.2,245.4 Z" fill="#d0d0d0" stroke="#555" stroke-width="1.1" stroke-linejoin="miter"/><polygon points="617.30,230.80 619.65,236.36 625.67,236.88 621.10,240.84 622.47,246.72 617.30,243.60 612.13,246.72 613.50,240.84 608.93,236.88 614.95,236.36" fill="#d0d0d0" stroke="#555" stroke-width="1"/><path d="M650.3,245.3 L663.9,232" stroke="#777" stroke-width="0.9"/><rect x="524.4" y="276.40000000000003" width="123.6" height="1.8" rx="0.9" fill="#b4b4b4"/><circle cx="602.5" cy="277.3" r="2.9" fill="#fff" stroke="#555" stroke-width="1.1"/><rect x="650.9" y="271.6" width="20.3" height="10.6" fill="#fff" stroke="#c8c8c8" stroke-width="0.8"/><rect x="524.4" y="301.40000000000003" width="123.6" height="1.8" rx="0.9" fill="#b4b4b4"/><circle cx="593.1" cy="302.3" r="2.9" fill="#fff" stroke="#555" stroke-width="1.1"/><rect x="650.9" y="296.6" width="20.3" height="10.6" fill="#fff" stroke="#c8c8c8" stroke-width="0.8"/><rect x="471" y="324" width="217" height="1" fill="#d9d9d9"/><rect x="479.9" y="350.5" width="193.8" height="42.6" rx="2.5" fill="#fff" stroke="#e2e2e2" stroke-width="0.7"/><path d="M663.8,357.9 l4.2,4.2 M668,357.9 l-4.2,4.2" stroke="#666" stroke-width="0.9"/><rect x="585.4" y="400.1" width="18.2" height="17.3" rx="2.2" fill="#f0f0f0" stroke="#b9b9b9" stroke-width="0.8"/><path d="M590.8,404.3 L599.6,413.4" stroke="#444" stroke-width="1.6"/><path d="M589.8,403.6 h2 M590.8,402.6 v2 M589,407.5 h1.4 M593.5,402 v1.2" stroke="#444" stroke-width="0.8"/><rect x="608.2" y="400.1" width="65.5" height="17.3" rx="2.2" fill="#f0f0f0" stroke="#b9b9b9" stroke-width="0.8"/><rect x="615.6" y="405" width="8.4" height="8" rx="1" fill="none" stroke="#555" stroke-width="1.1"/><path d="M619.3,409.2 L624.4,404.2 M621.8,403.8 h3 v3" fill="none" stroke="#555" stroke-width="1.1"/><rect x="481.75" y="455.0" width="60.25" height="42.0" fill="#f4f4f5" stroke="#c9c9c9" stroke-width="1"/><rect x="546.75" y="455.0" width="60.25" height="42.0" fill="#f4f4f5" stroke="#c9c9c9" stroke-width="1"/><rect x="611.75" y="455.0" width="61.0" height="42.0" fill="#f4f4f5" stroke="#c9c9c9" stroke-width="1"/><rect x="481.75" y="501.75" width="60.25" height="42.25" fill="#f4f4f5" stroke="#c9c9c9" stroke-width="1"/><rect x="546.75" y="501.75" width="60.25" height="42.25" fill="#f4f4f5" stroke="#c9c9c9" stroke-width="1"/><rect x="611.75" y="501.75" width="61.0" height="42.25" fill="#f4f4f5" stroke="#c9c9c9" stroke-width="1"/><rect x="481.75" y="551.0" width="60.25" height="48.5" fill="#f4f4f5" stroke="#c9c9c9" stroke-width="1"/><rect x="546.75" y="551.0" width="60.25" height="48.5" fill="#f4f4f5" stroke="#c9c9c9" stroke-width="1"/><rect x="611.75" y="551.0" width="61.0" height="48.5" fill="#f4f4f5" stroke="#c9c9c9" stroke-width="1"/><rect x="497.4" y="467.1" width="34.6" height="21.7" rx="7" fill="none" stroke="#1e1e1e" stroke-width="1.1"/><path d="M561.5,467.1 h27 a7,7 0 0 1 7,7 v7.7 a7,7 0 0 1 -7,7 h-20 a7,7 0 0 1 -7,-7 z" fill="none" stroke="#1e1e1e" stroke-width="1.1"/><path d="M633,467.1 h19.5 a8,8 0 0 1 8,8 v13.7 h-20.3 a7,7 0 0 1 -7,-7 z" fill="none" stroke="#1e1e1e" stroke-width="1.1"/><path d="M490.7,514.7 h43.8 l-3.6,20.2 h-36.5 z" fill="none" stroke="#1e1e1e" stroke-width="1.1"/><path d="M557.2,514.7 h38.4 v20.2 h-33.2 z" fill="none" stroke="#1e1e1e" stroke-width="1.1"/><path d="M628.4,514.7 h24.5 a8,8 0 0 1 8,8 v4.2 a8,8 0 0 1 -8,8 h-24.5 z" fill="none" stroke="#1e1e1e" stroke-width="1.1"/><clipPath id="vc"><rect x="471" y="450" width="217" height="134"/></clipPath><g clip-path="url(#vc)"><path d="M495.5,564.9 h31.5 l6,25 M495.5,564.9 l6,25" fill="none" stroke="#1e1e1e" stroke-width="1.1"/><path d="M560.4,563 l31.7,5.5 v25 M560.4,563 v25" fill="none" stroke="#1e1e1e" stroke-width="1.1"/><path d="M626.5,590 v-19 q0,-8 8,-8 q14,0.5 24,4 v23" fill="none" stroke="#1e1e1e" stroke-width="1.1"/></g><rect x="685.6" y="465" width="3.2" height="76.5" rx="1.6" fill="#d5d5d5"/><rect x="471" y="584" width="217" height="400" fill="#efefef"/><rect x="471" y="584" width="217" height="1" fill="#e0e0e0"/><path d="M486.5,633.5 q9,-3.5 17.5,0 v11 h-17.5 z" fill="none" stroke="#5a5a5a" stroke-width="1.1"/><path d="M487.5,635 h15.5" stroke="#5a5a5a" stroke-width="0.7" stroke-dasharray="0.9,1"/><path d="M485,637.5 l1.3,1.2 l-1.3,1.2" fill="none" stroke="#5a5a5a" stroke-width="0.8"/><path d="M541.3,631.8 h9.1 l3.8,12.2 h-16.8 z" fill="none" stroke="#5a5a5a" stroke-width="1.1"/><path d="M537.8,631.8 h2 M552,631.8 h2 M537.8,631.8 v11 M556,631.8 v11" stroke="#b5b5b5" stroke-width="0.6" stroke-dasharray="0.8,0.8"/><path d="M593.2,632.6 h18.5 l-5.8,11.5 h-18.5 z" fill="none" stroke="#5a5a5a" stroke-width="1.1"/><path d="M588.3,632.6 h4 M588.3,632.6 v11 M606.5,633 v11" stroke="#b5b5b5" stroke-width="0.6" stroke-dasharray="0.8,0.8"/><path d="M644.4,644.3 v-13.5 l2.5,2.6 l2.6,-2.6 l2.6,2.6 l2.6,-2.6 l2.6,2.6 l2.6,-2.6 l2.5,2.6 v11 z" fill="none" stroke="#5a5a5a" stroke-width="1.1"/><rect x="471" y="675" width="217" height="1" fill="#dddddd"/><rect x="471" y="710" width="217" height="1" fill="#dddddd"/><rect x="471" y="746" width="217" height="1" fill="#dddddd"/><rect x="471" y="782" width="217" height="1" fill="#dddddd"/><rect x="471" y="879" width="217" height="1" fill="#dddddd"/><path d="M485.8,690.9000000000001 l2.2,2.3 l-2.2,2.3" fill="none" stroke="#555" stroke-width="1"/><path d="M485.8,726.9000000000001 l2.2,2.3 l-2.2,2.3" fill="none" stroke="#555" stroke-width="1"/><path d="M485.8,763.2 l2.2,2.3 l-2.2,2.3" fill="none" stroke="#555" stroke-width="1"/><path d="M485.8,799.0 l2.2,2.3 l-2.2,2.3" fill="none" stroke="#555" stroke-width="1"/><rect x="497" y="689" width="11" height="11.5" rx="2.5" fill="none" stroke="#5a5a5a" stroke-width="1"/><path d="M500.5,687.5 q0,-2 2,-2 h7 q2,0 2,2 v8 q0,2 -2,2" fill="none" stroke="#5a5a5a" stroke-width="0.9" stroke-dasharray="1.2,0.8"/><path d="M502.5,692.8 v3.5 M500.7,694.6 h3.5" stroke="#5a5a5a" stroke-width="0.8"/><circle cx="503.7" cy="729.7" r="6.4" fill="none" stroke="#505050" stroke-width="1.2"/><circle cx="503.7" cy="729.7" r="4.4" fill="none" stroke="#505050" stroke-width="1"/><circle cx="503.7" cy="729.7" r="2.5" fill="#efefef" stroke="#505050" stroke-width="1"/><rect x="498.5" y="761" width="11" height="11" rx="1" fill="none" stroke="#505050" stroke-width="1.2"/><path d="M502.2,761 v11 M505.9,761 v11 M498.5,764.7 h11 M498.5,768.4 h11" stroke="#505050" stroke-width="1"/><rect x="496.8" y="793" width="9" height="8.5" fill="#6a6a6a"/><rect x="501.8" y="798" width="9" height="8.7" fill="#6a6a6a" stroke="#5a5a5a" stroke-width="0.5"/><path d="M496.7,830.3 h9.5 v5 h6.8 v10.5 h-10.5 v-5 h-5.8 z" fill="#4d4d4d"/><path d="M535.8,828 h10.7 v4.6 h6.8 v13.2 h-11.6 v-4.8 h-5.9 z" fill="#4d4d4d"/><rect x="541.7" y="832.6" width="4.8" height="8.4" fill="#efefef"/><rect x="540.6" y="833.1" width="5.5" height="8.2" fill="#efefef"/><rect x="578.7" y="828" width="11" height="10.5" fill="#4d4d4d"/><rect x="584.5" y="834" width="11.7" height="11.5" fill="#f7f7f7" stroke="#4d4d4d" stroke-width="1.1"/><rect x="622.2" y="828.5" width="10.5" height="10" fill="none" stroke="#6a6a6a" stroke-width="1.1"/><rect x="628.5" y="834.3" width="11" height="11" fill="none" stroke="#6a6a6a" stroke-width="1.1"/><rect x="628.5" y="834.3" width="4.2" height="4.2" fill="#4d4d4d"/></svg><div class="t" style="left:480.60px;top:196.58px;font-size:12.06px;color:#4a4a4a;font-weight:bold;font-style:normal;transform:scaleX(0.8459);transform-origin:0 0;">Shapes</div><div class="t" style="left:480.30px;top:269.87px;font-size:11.19px;color:#4a4a4a;font-weight:normal;font-style:normal;transform:scaleX(0.9643);transform-origin:0 0;-webkit-text-stroke:0.22px currentColor;">Angle X</div><div class="t" style="left:655.00px;top:271.86px;font-size:8.00px;color:#555;font-weight:normal;font-style:normal;transform:scaleX(0.8990);transform-origin:0 0;-webkit-text-stroke:0.22px currentColor;">160</div><div class="t" style="left:480.30px;top:294.87px;font-size:11.19px;color:#4a4a4a;font-weight:normal;font-style:normal;transform:scaleX(0.9693);transform-origin:0 0;-webkit-text-stroke:0.22px currentColor;">Angle Y</div><div class="t" style="left:655.00px;top:296.86px;font-size:8.00px;color:#555;font-weight:normal;font-style:normal;transform:scaleX(0.8990);transform-origin:0 0;-webkit-text-stroke:0.22px currentColor;">145</div><div class="t" style="left:480.25px;top:330.68px;font-size:12.06px;color:#4a4a4a;font-weight:normal;font-style:normal;transform:scaleX(0.8740);transform-origin:0 0;-webkit-text-stroke:0.22px currentColor;">Generative Shape</div><div class="t" style="left:486.30px;top:355.28px;font-size:9.30px;color:#444;font-weight:normal;font-style:italic;transform:scaleX(0.9424);transform-origin:0 0;-webkit-text-stroke:0.22px currentColor;">Describe the shape you want:</div><div class="t" style="left:486.30px;top:367.58px;font-size:9.30px;color:#444;font-weight:normal;font-style:italic;transform:scaleX(0.9777);transform-origin:0 0;-webkit-text-stroke:0.22px currentColor;">A flower with 3 petals</div><div class="t" style="left:629.40px;top:402.30px;font-size:10.61px;color:#4a4a4a;font-weight:normal;font-style:normal;transform:scaleX(0.8883);transform-origin:0 0;-webkit-text-stroke:0.22px currentColor;">Generate</div><div class="t" style="left:481.10px;top:433.23px;font-size:10.90px;color:#4a4a4a;font-weight:normal;font-style:normal;transform:scaleX(1.0122);transform-origin:0 0;-webkit-text-stroke:0.22px currentColor;">Variatons</div><div class="t" style="left:481.50px;top:601.64px;font-size:11.34px;color:#4a4a4a;font-weight:normal;font-style:normal;transform:scaleX(0.9412);transform-origin:0 0;-webkit-text-stroke:0.22px currentColor;">Extensions</div><div class="t" style="left:484.40px;top:651.60px;font-size:11.05px;color:#4a4a4a;font-weight:normal;font-style:normal;transform:scaleX(0.9109);transform-origin:0 0;-webkit-text-stroke:0.22px currentColor;">Bend</div><div class="t" style="left:534.60px;top:651.60px;font-size:11.05px;color:#4a4a4a;font-weight:normal;font-style:normal;transform:scaleX(0.8830);transform-origin:0 0;-webkit-text-stroke:0.22px currentColor;">Scale</div><div class="t" style="left:588.20px;top:651.60px;font-size:11.05px;color:#4a4a4a;font-weight:normal;font-style:normal;transform:scaleX(0.9181);transform-origin:0 0;-webkit-text-stroke:0.22px currentColor;">Skew</div><div class="t" style="left:639.20px;top:651.60px;font-size:11.05px;color:#4a4a4a;font-weight:normal;font-style:normal;transform:scaleX(0.9892);transform-origin:0 0;-webkit-text-stroke:0.22px currentColor;">Zigzag</div><div class="t" style="left:525.80px;top:688.20px;font-size:11.05px;color:#4a4a4a;font-weight:normal;font-style:normal;transform:scaleX(0.9208);transform-origin:0 0;-webkit-text-stroke:0.22px currentColor;">Repeat</div><div class="t" style="left:525.80px;top:724.20px;font-size:11.05px;color:#4a4a4a;font-weight:normal;font-style:normal;transform:scaleX(1.0080);transform-origin:0 0;-webkit-text-stroke:0.22px currentColor;">Offset</div><div class="t" style="left:525.80px;top:760.80px;font-size:11.05px;color:#4a4a4a;font-weight:normal;font-style:normal;transform:scaleX(0.9823);transform-origin:0 0;-webkit-text-stroke:0.22px currentColor;">Grid</div><div class="t" style="left:525.80px;top:793.30px;font-size:11.05px;color:#4a4a4a;font-weight:normal;font-style:normal;transform:scaleX(0.9930);transform-origin:0 0;-webkit-text-stroke:0.22px currentColor;">Combine</div>
<svg class="r" style="left:0px;top:0px" width="1920" height="1080" viewBox="0 0 1920 1080"><rect x="470.6" y="983.3" width="55.7" height="15.9" fill="#fff"/><rect x="526.8" y="983.3" width="16.9" height="15.9" fill="#fff"/><path d="M531.5,989.5 l3.5,3.5 l3.5,-3.5" fill="none" stroke="#555" stroke-width="1"/><path d="M553.3,987.2 v8 M561,987.2 l-5,4 l5,4 z" stroke="#aaa" fill="#aaa" stroke-width="1"/><path d="M577,987.2 l-5,4 l5,4 z" fill="#aaa"/><rect x="586.8" y="983.3" width="40.7" height="15.9" fill="#fff"/><rect x="628" y="983.3" width="17.8" height="15.9" fill="#fff"/><path d="M633.5,989.5 l3.5,3.5 l3.5,-3.5" fill="none" stroke="#555" stroke-width="1"/><path d="M655,987.2 l5,4 l-5,4 z" fill="#aaa"/><path d="M671.5,987.2 l5,4 l-5,4 z M678.3,987.2 v8" fill="#aaa" stroke="#aaa" stroke-width="1"/><rect x="689" y="983.3" width="0.8" height="15.9" fill="#c8c8c8"/><rect x="892.5" y="983.3" width="0.8" height="15.9" fill="#c8c8c8"/><rect x="910.7" y="983.3" width="707.3" height="15.9" fill="#fff"/><path d="M1623.3,181.5 l3.8,-3.8 l3.8,3.8" fill="none" stroke="#9a9a9a" stroke-width="1"/><path d="M1623.3,972 l3.8,3.8 l3.8,-3.8" fill="none" stroke="#9a9a9a" stroke-width="1"/><rect x="1620.3" y="540" width="14" height="26" rx="7" fill="#dcdcdc"/></svg><div class="t" style="left:476.30px;top:985.93px;font-size:10.90px;color:#444;font-weight:normal;font-style:normal;transform:scaleX(0.9146);transform-origin:0 0;-webkit-text-stroke:0.22px currentColor;">100%</div><div class="t" style="left:765.95px;top:985.87px;font-size:11.19px;color:#444;font-weight:normal;font-style:normal;transform:scaleX(0.9663);transform-origin:0 0;-webkit-text-stroke:0.22px currentColor;">Artboard 1</div>
<svg class="r" style="left:0px;top:0px" width="1920" height="1080" viewBox="0 0 1920 1080"><rect x="1637" y="140.5" width="257" height="10" fill="#d9d9d9"/><path d="M1880.5,146.2 l2,2 l-2,2 M1884,146.2 l2,2 l-2,2" fill="none" stroke="#aaa" stroke-width="0.8" transform="translate(0,-3)"/><rect x="1637" y="150.4" width="257" height="28.5" fill="#d9d9d9"/><rect x="1637" y="150" width="257" height="0.8" fill="#cdcdcd"/><rect x="1637" y="150.4" width="73" height="29" fill="#efefef"/><rect x="1761.2" y="151.5" width="0.8" height="27" fill="#c9c9c9"/><rect x="1825.2" y="151.5" width="0.8" height="27" fill="#c9c9c9"/><rect x="1710" y="178.4" width="184" height="0.8" fill="#cfcfcf"/><rect x="1637" y="213" width="257" height="1" fill="#d9d9d9"/><rect x="1637" y="341" width="257" height="1" fill="#d9d9d9"/><rect x="1637" y="381" width="257" height="1" fill="#d9d9d9"/><rect x="1637" y="422" width="257" height="1" fill="#d9d9d9"/><rect x="1637" y="463" width="257" height="1" fill="#d9d9d9"/><rect x="1637" y="603" width="257" height="1" fill="#d9d9d9"/><rect x="1736.9" y="248" width="84" height="19.3" rx="2" fill="#fff" stroke="#dcdcdc" stroke-width="0.6"/><path d="M1808.2,256.4 l3,3 l3,-3" fill="none" stroke="#444" stroke-width="1"/><rect x="1736.9" y="276.9" width="84" height="19.8" rx="2" fill="#fff" stroke="#dcdcdc" stroke-width="0.6"/><rect x="1802" y="277" width="0.8" height="19.6" fill="#dcdcdc"/><path d="M1808.2,285.6 l3,3 l3,-3" fill="none" stroke="#444" stroke-width="1"/><path d="M1840.7,283.5 l-3.8,3.6 l3.8,3.6 z M1857.7,283.5 l3.8,3.6 l-3.8,3.6 z" fill="#aaa"/><rect x="1736.9" y="306.9" width="84.5" height="19.8" rx="2" fill="#f0f0f0" stroke="#b9b9b9" stroke-width="0.8"/><path d="M1740,356.5 h14.5 M1740,356.5 v13" stroke="#555" stroke-width="3" fill="none"/><path d="M1742,355.6 v2 M1745,355.6 v2 M1748,355.6 v2 M1751,355.6 v2 M1739,359 h2 M1739,362 h2 M1739,365 h2 M1739,368 h2" stroke="#efefef" stroke-width="0.8"/><rect x="1770.3" y="355.4" width="14.6" height="14.6" fill="none" stroke="#555" stroke-width="1.6"/><path d="M1775.2,355.4 v14.6 M1780.1,355.4 v14.6 M1770.3,360.3 h14.6 M1770.3,365.2 h14.6" stroke="#555" stroke-width="1.4"/><defs><pattern id="chk" width="2" height="2" patternUnits="userSpaceOnUse"><rect width="1" height="1" fill="#cfcfcf"/><rect x="1" y="1" width="1" height="1" fill="#cfcfcf"/></pattern></defs><rect x="1800.6" y="355.4" width="15.4" height="14.6" fill="url(#chk)" stroke="#555" stroke-width="1.2"/><rect x="1735" y="391.3" width="24.5" height="24.2" rx="2.5" fill="#bdbdbd"/><rect x="1796.3" y="391.3" width="24.2" height="24.2" rx="2.5" fill="#bdbdbd"/><path d="M1742,396.5 v14 M1745.5,396.5 v14 M1739.5,400.5 h14 M1739.5,406.5 h14" stroke="#555" stroke-width="1.1"/><path d="M1772,396.5 v14 M1775.5,396.5 v14 M1769.5,400.5 h12 M1769.5,406.5 h6" stroke="#555" stroke-width="1.1"/><rect x="1777.5" y="406.2" width="7" height="5" fill="#555"/><path d="M1779,406.5 v-2 a2,2 0 0 1 4,0" fill="none" stroke="#555" stroke-width="1"/><path d="M1803,396.5 v14 M1800.5,400.5 h13" stroke="#555" stroke-width="1.1"/><path d="M1806,396.5 l-3,3 l3,3" fill="none" stroke="#555" stroke-width="1"/><path d="M1812,403 l-3,4 h2.5 l-2,4 l4,-5 h-2.5 z" fill="#555"/><rect x="1735" y="432" width="24.5" height="24.2" rx="2.5" fill="#bdbdbd"/><path d="M1741.5,437.5 v13" stroke="#555" stroke-width="1"/><circle cx="1741.5" cy="444" r="1.3" fill="#555"/><path d="M1745.5,441.5 h4 a2.6,2.6 0 0 1 0,5.2 h-4" fill="none" stroke="#555" stroke-width="1.6"/><path d="M1770.5,437.5 v13 M1770.5,438.5 h3 M1770.5,441 h3 M1770.5,443.5 h3 M1770.5,446 h3 M1770.5,448.5 h3" stroke="#555" stroke-width="0.9"/><path d="M1775.5,441.5 h4 a2.6,2.6 0 0 1 0,5.2 h-4" fill="none" stroke="#555" stroke-width="1.6"/><rect x="1800.3" y="437.5" width="3.4" height="3" fill="#555"/><rect x="1800.3" y="442.5" width="3.4" height="3" fill="#555"/><rect x="1800.3" y="447.5" width="3.4" height="3" fill="#555"/><path d="M1805.5,441.5 h4 a2.6,2.6 0 0 1 0,5.2 h-4" fill="none" stroke="#555" stroke-width="1.6"/><rect x="1757" y="494.5" width="59.3" height="20.5" rx="2" fill="#fff" stroke="#e0e0e0" stroke-width="0.7"/><rect x="1650" y="526.1999999999999" width="11.6" height="11.6" rx="2" fill="#fff" stroke="#7a7a7a" stroke-width="0.9"/><rect x="1649.6" y="550.0" width="12.3" height="12.3" rx="2" fill="#6e6e6e"/><path d="M1651.6,556.5 l2.8,2.8 l5.4,-5.6" fill="none" stroke="#fff" stroke-width="1.8"/><rect x="1650" y="575.4" width="11.6" height="11.6" rx="2" fill="#fff" stroke="#7a7a7a" stroke-width="0.9"/><rect x="1649" y="642.4" width="100.8" height="20.4" rx="2" fill="#f0f0f0" stroke="#b9b9b9" stroke-width="0.8"/><rect x="1762.3" y="642.4" width="101" height="20.4" rx="2" fill="#f0f0f0" stroke="#b9b9b9" stroke-width="0.8"/></svg><div class="t" style="left:1647.80px;top:159.17px;font-size:11.19px;color:#444;font-weight:bold;font-style:normal;transform:scaleX(0.9628);transform-origin:0 0;">Properties</div><div class="t" style="left:1719.60px;top:160.17px;font-size:11.19px;color:#555;font-weight:normal;font-style:normal;-webkit-text-stroke:0.22px currentColor;">Layers</div><div class="t" style="left:1772.90px;top:159.91px;font-size:11.48px;color:#555;font-weight:normal;font-style:normal;transform:scaleX(1.0378);transform-origin:0 0;-webkit-text-stroke:0.22px currentColor;">Libraries</div><div class="t" style="left:1648.90px;top:190.00px;font-size:11.05px;color:#4a4a4a;font-weight:normal;font-style:normal;transform:scaleX(0.9707);transform-origin:0 0;-webkit-text-stroke:0.22px currentColor;">No Selection</div><div class="t" style="left:1648.90px;top:224.90px;font-size:11.05px;color:#4a4a4a;font-weight:normal;font-style:normal;transform:scaleX(1.0050);transform-origin:0 0;-webkit-text-stroke:0.22px currentColor;">Document</div><div class="t" style="left:1702.20px;top:252.20px;font-size:11.05px;color:#4a4a4a;font-weight:normal;font-style:normal;transform:scaleX(0.9845);transform-origin:0 0;-webkit-text-stroke:0.22px currentColor;">Units:</div><div class="t" style="left:1743.30px;top:252.20px;font-size:11.05px;color:#333;font-weight:normal;font-style:normal;transform:scaleX(0.9689);transform-origin:0 0;-webkit-text-stroke:0.22px currentColor;">Pixel</div><div class="t" style="left:1683.20px;top:281.60px;font-size:11.05px;color:#4a4a4a;font-weight:normal;font-style:normal;transform:scaleX(1.0299);transform-origin:0 0;-webkit-text-stroke:0.22px currentColor;">Artboard:</div><div class="t" style="left:1743.80px;top:281.60px;font-size:11.05px;color:#333;font-weight:normal;font-style:normal;-webkit-text-stroke:0.22px currentColor;">1</div><div class="t" style="left:1743.50px;top:311.50px;font-size:11.05px;color:#3a3a3a;font-weight:normal;font-style:normal;transform:scaleX(1.0160);transform-origin:0 0;-webkit-text-stroke:0.22px currentColor;">Edit Artboards</div><div class="t" style="left:1648.75px;top:356.17px;font-size:11.19px;color:#4a4a4a;font-weight:normal;font-style:normal;transform:scaleX(0.9647);transform-origin:0 0;-webkit-text-stroke:0.22px currentColor;">Ruler &amp; Grids</div><div class="t" style="left:1648.75px;top:396.80px;font-size:11.05px;color:#4a4a4a;font-weight:normal;font-style:normal;transform:scaleX(0.9514);transform-origin:0 0;-webkit-text-stroke:0.22px currentColor;">Guides</div><div class="t" style="left:1648.75px;top:437.50px;font-size:11.05px;color:#4a4a4a;font-weight:normal;font-style:normal;transform:scaleX(0.9785);transform-origin:0 0;-webkit-text-stroke:0.22px currentColor;">Snap Options</div><div class="t" style="left:1648.75px;top:473.80px;font-size:11.05px;color:#4a4a4a;font-weight:normal;font-style:normal;transform:scaleX(0.9486);transform-origin:0 0;-webkit-text-stroke:0.22px currentColor;">Preferences</div><div class="t" style="left:1648.75px;top:500.50px;font-size:11.05px;color:#4a4a4a;font-weight:normal;font-style:normal;transform:scaleX(0.9918);transform-origin:0 0;-webkit-text-stroke:0.22px currentColor;">Keyboard Increment:</div><div class="t" style="left:1764.30px;top:498.50px;font-size:11.05px;color:#333;font-weight:normal;font-style:normal;-webkit-text-stroke:0.22px currentColor;">1 px</div><div class="t" style="left:1667.50px;top:525.00px;font-size:11.05px;color:#4a4a4a;font-weight:normal;font-style:normal;transform:scaleX(0.9440);transform-origin:0 0;-webkit-text-stroke:0.22px currentColor;">Use Preview Bounds</div><div class="t" style="left:1667.50px;top:549.50px;font-size:11.05px;color:#4a4a4a;font-weight:normal;font-style:normal;transform:scaleX(0.9430);transform-origin:0 0;-webkit-text-stroke:0.22px currentColor;">Scale Corners</div><div class="t" style="left:1667.50px;top:573.80px;font-size:11.05px;color:#4a4a4a;font-weight:normal;font-style:normal;transform:scaleX(0.9590);transform-origin:0 0;-webkit-text-stroke:0.22px currentColor;">Scale Strokes &amp; Effects</div><div class="t" style="left:1648.90px;top:619.70px;font-size:11.05px;color:#4a4a4a;font-weight:normal;font-style:normal;-webkit-text-stroke:0.22px currentColor;">Quick Actions</div><div class="t" style="left:1658.90px;top:647.20px;font-size:11.05px;color:#3a3a3a;font-weight:normal;font-style:normal;transform:scaleX(0.9844);transform-origin:0 0;-webkit-text-stroke:0.22px currentColor;">Document Setup</div><div class="t" style="left:1784.55px;top:647.20px;font-size:11.05px;color:#3a3a3a;font-weight:normal;font-style:normal;transform:scaleX(0.9486);transform-origin:0 0;-webkit-text-stroke:0.22px currentColor;">Preferences</div></body></html>
